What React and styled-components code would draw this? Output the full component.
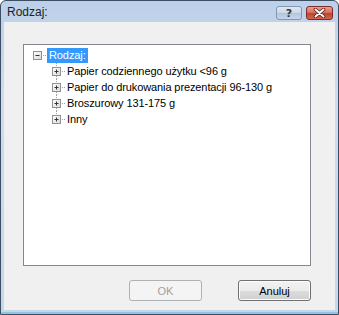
import styled, { createGlobalStyle } from "styled-components";

const Global = createGlobalStyle`
  html, body { margin: 0; padding: 0; background: #ffffff; }
  body { font-family: "Liberation Sans", Arial, sans-serif; }
`;

const items = [
  "Papier codziennego użytku <96 g",
  "Papier do drukowania prezentacji 96-130 g",
  "Broszurowy 131-175 g",
  "Inny",
];

const Expander = ({ open, up, down }) => (
  <svg width="19" height="16" viewBox="0 0 19 16">
    {up && <path d="M9.5 0v1M9.5 2v1" stroke="#a0a0a0" strokeWidth="1" />}
    {down && <path d="M9.5 13v1M9.5 15v1" stroke="#a0a0a0" strokeWidth="1" />}
    <path d="M15 8.5h1M17 8.5h1" stroke="#a0a0a0" strokeWidth="1" />
    <defs>
      <linearGradient id="exp" x1="0" y1="0" x2="1" y2="1">
        <stop offset="0" stopColor="#ffffff" />
        <stop offset="1" stopColor="#d8d8d8" />
      </linearGradient>
    </defs>
    <rect x="5.5" y="4.5" width="8" height="8" fill="url(#exp)" stroke="#919191" />
    <path d="M7.5 8.5h4" stroke="#333" />
    {!open && <path d="M9.5 6.5v4" stroke="#333" />}
  </svg>
);

const App = () => {
  return (
    <>
      <Global />
      <Window>
        <TitleBar>
          <Title>Rodzaj:</Title>
          <CaptionButtons>
            <HelpButton>?</HelpButton>
            <CloseButton>
              <svg width="13" height="10" viewBox="0 0 13 10">
                <path d="M2.5 1.5l8 7M10.5 1.5l-8 7" stroke="#5a1a14" strokeWidth="3.6" strokeLinecap="round" />
                <path d="M2.5 1.5l8 7M10.5 1.5l-8 7" stroke="#ffffff" strokeWidth="2" strokeLinecap="round" />
              </svg>
            </CloseButton>
          </CaptionButtons>
        </TitleBar>
        <Client>
          <Tree>
            <Row $level={0}>
              <Expander open />
              <Label $selected>Rodzaj:</Label>
            </Row>
            {items.map((t, i) => (
              <Row key={t} $level={1}>
                <Expander up down={i < items.length - 1} />
                <Label>{t}</Label>
              </Row>
            ))}
          </Tree>
          <Buttons>
            <Button disabled>OK</Button>
            <Button>Anuluj</Button>
          </Buttons>
        </Client>
      </Window>
    </>
  );
};
export default App;

const Window = styled.div`
  width: 339px;
  height: 315px;
  box-sizing: border-box;
  border: 1px solid #3c4e63;
  border-radius: 6px 6px 0 0;
  background: linear-gradient(180deg, #bcd0e9 0%, #cddcef 30%, #c6d7ec 100%);
  display: flex;
  flex-direction: column;
  padding: 0 3px 4px 3px;
  box-shadow: inset 0 -2px 0 #8fc4e2;
`;

const TitleBar = styled.div`
  height: 21px;
  display: flex;
  align-items: center;
  justify-content: space-between;
  padding: 0 2px 0 3px;
`;

const Title = styled.div`
  font-family: "Liberation Sans", Arial, sans-serif;
  font-size: 12px;
  color: #1e1e1e;
  margin-top: 1px;
`;

const CaptionButtons = styled.div`
  display: flex;
  gap: 4px;
  align-self: flex-start;
  margin-top: 5px;
`;

const CaptionButton = styled.div`
  height: 14px;
  box-sizing: border-box;
  border-radius: 3px;
  display: flex;
  align-items: center;
  justify-content: center;
`;

const HelpButton = styled(CaptionButton)`
  width: 26px;
  border: 1px solid #8397b0;
  background: linear-gradient(180deg, #dfe8f3 0%, #c9d7e8 50%, #b3c5dc 51%, #c6d6ea 100%);
  font-family: "DejaVu Sans", sans-serif;
  font-weight: bold;
  font-size: 11px;
  color: #2e3a49;
  line-height: 1;
`;

const CloseButton = styled(CaptionButton)`
  width: 27px;
  border: 1px solid #7f2a22;
  background: linear-gradient(180deg, #e8a294 0%, #d36c5b 50%, #c0412e 51%, #d2664f 100%);
`;

const Client = styled.div`
  flex: 1;
  background: #f0f0f0;
  display: flex;
  flex-direction: column;
  padding: 22px 24px 9px 19px;
  min-height: 0;
`;

const Tree = styled.div`
  flex: 1;
  background: #ffffff;
  border: 1px solid #828790;
  padding: 2px 0 0 4px;
  font-family: "Liberation Sans", Arial, sans-serif;
  font-size: 11px;
  letter-spacing: -0.1px;
  color: #000000;
`;

const Row = styled.div`
  height: 16px;
  display: flex;
  align-items: center;
  padding-left: ${(p) => p.$level * 19}px;
`;

const Label = styled.span`
  height: 15px;
  line-height: 15px;
  padding: 0 2px 0 ${(p) => (p.$selected ? 2 : 1)}px;
  white-space: nowrap;
  background: ${(p) => (p.$selected ? "#3399ff" : "transparent")};
  color: ${(p) => (p.$selected ? "#ffffff" : "#000000")};
`;

const Buttons = styled.div`
  display: flex;
  justify-content: flex-end;
  gap: 36px;
  margin-top: 14px;
`;

const Button = styled.button`
  width: 73px;
  height: 21px;
  border-radius: 3px;
  font-family: "Liberation Sans", Arial, sans-serif;
  font-size: 11px;
  font-weight: normal;
  padding: 0;
  border: 1px solid ${(p) => (p.disabled ? "#adb2b5" : "#707070")};
  color: ${(p) => (p.disabled ? "#a0a0a0" : "#000000")};
  background: ${(p) =>
    p.disabled
      ? "#f4f4f4"
      : "linear-gradient(180deg, #f2f2f2 0%, #ebebeb 50%, #dddddd 51%, #cfcfcf 100%)"};
  box-shadow: inset 0 0 0 1px ${(p) => (p.disabled ? "#f4f4f4" : "#fcfcfc")};
`;
